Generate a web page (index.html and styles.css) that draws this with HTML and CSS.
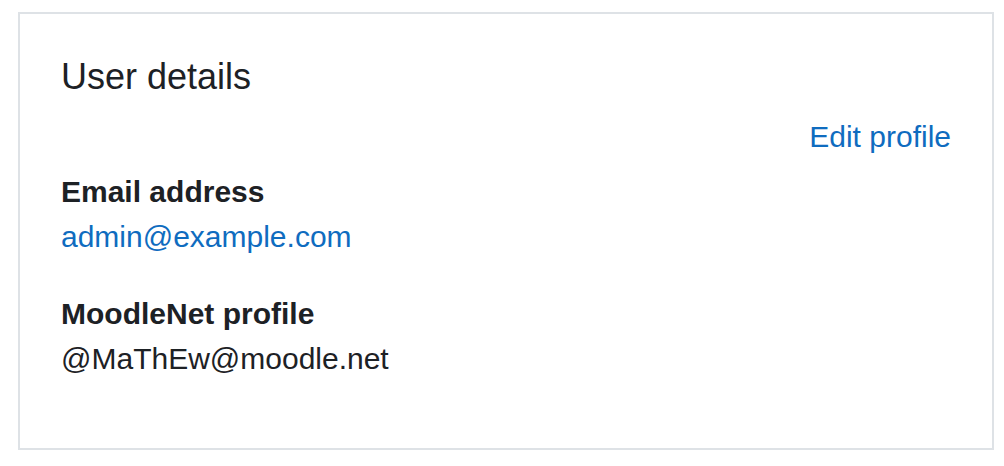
FILE: index.html
```html
<html>
	<head>
		<title>User details</title>
		<link rel="stylesheet" href="styles.css">
	</head>
	<body>
		<section class="card">

			<h3 class="card-title">User details</h3>

			<div class="card-actions">
				<a href="#">Edit profile</a>
			</div>

			<dl class="details">
				<dt>Email address</dt>
				<dd><a href="#">admin@example.com</a></dd>

				<dt>MoodleNet profile</dt>
				<dd>@MaThEw@moodle.net</dd>
			</dl>

		</section> <!-- end .card -->
	</body>
</html>
```

FILE: styles.css
```css
html, body {
	margin: 0;
	background: #fff;
}

body {
	padding: 12px 10px 16px 18px;
	font-family: "Liberation Sans", Arial, sans-serif;
	font-size: 30px;
	line-height: 1.5;
	color: #1d2125;
}

a {
	color: #0f6cbf;
	text-decoration: none;
}

.card {
	box-sizing: border-box;
	width: 976px;
	height: 438px;
	border: 2px solid #dee2e6;
	padding: 41px 41px 0 41px;
}

.card-title {
	margin: 0;
	font-size: 36px;
	font-weight: 400;
	line-height: 1.2;
}

.card-actions {
	text-align: right;
	margin-top: 16px;
}

.details {
	margin: 10px 0 0;
}

.details dt {
	font-weight: 700;
}

.details dd {
	margin: 0 0 32px;
}
```
